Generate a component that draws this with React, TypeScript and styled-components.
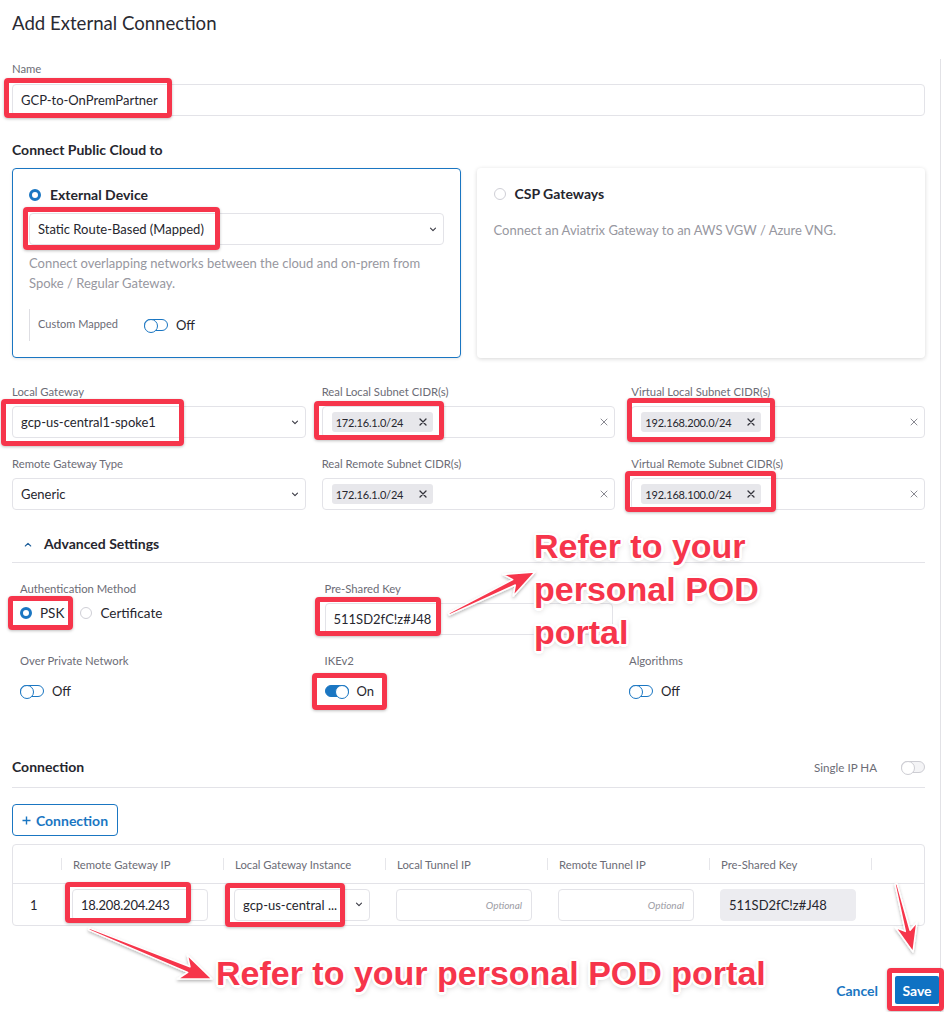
import React from "react";
import styled, { createGlobalStyle } from "styled-components";

const BLUE = "#1a76c2";
const RED = "#f6354b";

const GlobalStyle = createGlobalStyle`
  html, body { margin: 0; padding: 0; background: #fff; }
  body { font-family: Lato, "Noto Sans", sans-serif; color: #26262e; }
  * { box-sizing: border-box; }
`;

const Screen = styled.div`
  position: relative;
  width: 944px;
  height: 1012px;
  overflow: hidden;
  background: #fff;
`;

const Form = styled.div`
  width: 925px;
  padding: 11px 0 0 12px;
  display: flex;
  flex-direction: column;
`;

const Title = styled.h1`
  margin: 0;
  font-size: 18.6px;
  line-height: 24px;
  font-weight: 400;
  color: #2a2a32;
`;

const Label = styled.div<{ $mt?: number }>`
  margin-top: ${(p) => p.$mt ?? 0}px;
  font-size: 11.3px;
  line-height: 16px;
  color: #6c6c76;
  white-space: nowrap;
`;

const Field = styled.div`
  display: flex;
  flex-direction: column;
  gap: 6px;
  min-width: 0;
`;

const Box = styled.div<{ $muted?: boolean }>`
  height: 32px;
  width: 100%;
  border: 1px solid ${(p) => (p.$muted ? "#ececf0" : "#e3e3e8")};
  background: ${(p) => (p.$muted ? "#ececf0" : "#fff")};
  border-radius: 4px;
  display: flex;
  align-items: center;
  padding: 0 6px 0 8px;
  font-size: 13px;
  color: #26262e;
  gap: 6px;
  white-space: nowrap;
`;

const BoxText = styled.span<{ $digits?: boolean }>`
  flex: 1;
  overflow: hidden;
  text-overflow: ellipsis;
  letter-spacing: ${(p) => (p.$digits ? "-0.25px" : "0")};
`;

const Placeholder = styled.span`
  flex: 1;
  text-align: right;
  padding-right: 3px;
  font-size: 10px;
  font-style: italic;
  color: #9c9ca4;
`;

const SectionTitle = styled.div<{ $mt?: number }>`
  margin-top: ${(p) => p.$mt ?? 0}px;
  font-size: 14px;
  line-height: 18px;
  font-weight: 700;
  color: #26262e;
`;

const Cards = styled.div`
  margin-top: 9px;
  display: grid;
  grid-template-columns: 1fr 1fr;
  gap: 16px;
`;

const Card = styled.div<{ $active?: boolean }>`
  border: 1px solid ${(p) => (p.$active ? BLUE : "transparent")};
  border-radius: 4px;
  box-shadow: ${(p) => (p.$active ? "0 1px 3px rgba(0,0,0,0.10)" : "0 1px 4px rgba(0,0,0,0.16)")};
  padding: ${(p) => (p.$active ? "17px 16px 15px" : "16px 16px 15px")};
  display: flex;
  flex-direction: column;
  height: 190px;
`;

const RadioRow = styled.label<{ $gap?: number }>`
  display: flex;
  align-items: center;
  gap: ${(p) => p.$gap ?? 9}px;
  font-size: 13.5px;
  line-height: 18px;
`;

const CardHead = styled(RadioRow)`
  font-weight: 700;
  font-size: 14px;
`;

const Radio = styled.span<{ $checked?: boolean }>`
  flex: none;
  width: 12px;
  height: 12px;
  border-radius: 50%;
  background: #fff;
  border: ${(p) => (p.$checked ? `3.5px solid ${BLUE}` : "1px solid #cfcfd6")};
`;

const Desc = styled.p<{ $mt: number }>`
  margin: ${(p) => p.$mt}px 0 0;
  font-size: 13px;
  line-height: 20px;
  color: #9797a0;
`;

const SubOption = styled.div`
  margin-top: 16px;
  height: 32px;
  border-left: 1px solid #dedee3;
  padding-left: 8px;
  display: flex;
  align-items: center;
  font-size: 11px;
  color: #6c6c76;
`;

const SubLabel = styled.span`
  width: 106px;
  margin-top: -3px;
`;

const ToggleRow = styled.div`
  display: flex;
  align-items: center;
  gap: 8px;
  height: 32px;
  font-size: 13px;
  color: #26262e;
`;

const Toggle = styled.span<{ $on?: boolean; $disabled?: boolean }>`
  position: relative;
  flex: none;
  width: 24px;
  height: 12px;
  border-radius: 6px;
  border: 1.5px solid ${(p) => (p.$disabled ? "#cdcdd3" : BLUE)};
  background: ${(p) => (p.$on ? BLUE : p.$disabled ? "#f4f4f6" : "#fff")};
  &::after {
    content: "";
    position: absolute;
    top: -1.5px;
    ${(p) => (p.$on ? "right: -1.5px;" : "left: -1.5px;")}
    width: 12px;
    height: 12px;
    border-radius: 50%;
    border: 1.5px solid ${(p) => (p.$disabled ? "#cdcdd3" : BLUE)};
    background: #fff;
  }
`;

const Grid3 = styled.div<{ $mt: number; $pad?: number }>`
  margin-top: ${(p) => p.$mt}px;
  padding: 0 ${(p) => p.$pad ?? 0}px;
  display: grid;
  grid-template-columns: repeat(3, 1fr);
  column-gap: ${(p) => (p.$pad ? 16.5 : 16)}px;
  row-gap: 18px;
`;

const Tag = styled.span`
  display: inline-flex;
  align-items: center;
  gap: 16px;
  height: 20px;
  padding: 0 6px 0 4px;
  background: #e7e7eb;
  border-radius: 3px;
  font-size: 11px;
  letter-spacing: -0.2px;
  color: #26262e;
  margin-left: 1px;
`;

const Spacer = styled.span`
  flex: 1;
`;

const AdvHeader = styled.div`
  margin-top: 25px;
  padding: 0 0 9px 12px;
  border-bottom: 1px solid #e3e3e8;
  display: flex;
  align-items: center;
  gap: 12px;
  font-size: 14px;
  line-height: 18px;
  font-weight: 700;
`;

const RadioGroup = styled.div`
  height: 32px;
  padding-top: 1px;
  display: flex;
  align-items: flex-start;
  gap: 16px;
`;

const ConnHeader = styled.div`
  margin-top: 51px;
  padding-bottom: 11px;
  border-bottom: 1px solid #e3e3e8;
  display: flex;
  align-items: center;
  justify-content: space-between;
`;

const HaGroup = styled.div`
  display: flex;
  align-items: center;
  gap: 24px;
  font-size: 11.6px;
  color: #6c6c76;
`;

const AddButton = styled.button`
  margin-top: 16px;
  align-self: flex-start;
  height: 32px;
  width: 106px;
  border: 1px solid ${BLUE};
  border-radius: 4px;
  background: #fff;
  color: ${BLUE};
  font-family: inherit;
  font-size: 14px;
  font-weight: 700;
  display: flex;
  align-items: center;
  justify-content: center;
  gap: 5px;
  padding: 0;
`;

const Table = styled.div`
  margin-top: 8px;
  border: 1px solid #e3e3e8;
  border-radius: 4px;
`;

const TRow = styled.div<{ $head?: boolean }>`
  display: grid;
  grid-template-columns: 48px repeat(5, 162px) 1fr;
  height: ${(p) => (p.$head ? 39 : 41)}px;
  border-bottom: ${(p) => (p.$head ? "1px solid #e3e3e8" : "none")};
  align-items: center;
`;

const Th = styled.div<{ $sep?: boolean }>`
  position: relative;
  height: 100%;
  display: flex;
  align-items: center;
  padding-left: 12px;
  font-size: 11.3px;
  color: #6c6c76;
  white-space: nowrap;
  &::before {
    content: "";
    display: ${(p) => (p.$sep ? "block" : "none")};
    position: absolute;
    left: 0;
    top: 13px;
    height: 12px;
    border-left: 1px solid #e6e6ea;
  }
`;

const Td = styled.div<{ $index?: boolean }>`
  padding: 0 ${(p) => (p.$index ? "0 0 17px" : "15px 0 11px")};
  font-size: 13px;
  color: #26262e;
`;

const Footer = styled.div`
  margin-top: 50px;
  width: 944px;
  padding-right: 5px;
  display: flex;
  justify-content: flex-end;
  align-items: center;
  gap: 17px;
`;

const LinkButton = styled.button`
  border: none;
  background: none;
  padding: 0;
  color: ${BLUE};
  font-family: inherit;
  font-size: 14px;
  font-weight: 700;
`;

const PrimaryButton = styled.button`
  height: 28px;
  width: 44px;
  border: none;
  border-radius: 2px;
  background: #0f72c3;
  color: #fff;
  font-family: inherit;
  font-size: 14px;
  font-weight: 700;
  padding: 0;
`;

const ScrollEdge = styled.div`
  position: absolute;
  left: 940px;
  top: 59px;
  bottom: 0;
  border-left: 1px solid #e2e2e6;
`;

/* ---------- annotations ---------- */

const Mark = styled.div<{ $x: number; $y: number; $w: number; $h: number }>`
  position: absolute;
  left: ${(p) => p.$x}px;
  top: ${(p) => p.$y}px;
  width: ${(p) => p.$w}px;
  height: ${(p) => p.$h}px;
  border: 5px solid ${RED};
  border-radius: 4px;
  box-shadow: 0 1px 3px rgba(0, 0, 0, 0.25);
  pointer-events: none;
`;

const Callout = styled.div<{ $x: number; $y: number }>`
  position: absolute;
  left: ${(p) => p.$x}px;
  top: ${(p) => p.$y}px;
  font-family: "Liberation Sans", Arial, sans-serif;
  font-weight: 700;
  font-size: 34px;
  line-height: 43px;
  color: ${RED};
  white-space: nowrap;
  text-shadow: 2.5px 0 #fff, -2.5px 0 #fff, 0 2.5px #fff, 0 -2.5px #fff,
    1.8px 1.8px #fff, -1.8px -1.8px #fff, 1.8px -1.8px #fff, -1.8px 1.8px #fff,
    0 2px 6px rgba(0, 0, 0, 0.3);
`;

const ArrowLayer = styled.svg`
  position: absolute;
  left: 0;
  top: 0;
  width: 944px;
  height: 1012px;
  pointer-events: none;
`;

function arrowPoints(
  x1: number,
  y1: number,
  x2: number,
  y2: number,
  headLen = 28,
  headW = 24,
  shaftW = 6,
  tailW = 2
): string {
  const dx = x2 - x1;
  const dy = y2 - y1;
  const L = Math.hypot(dx, dy);
  const ux = dx / L;
  const uy = dy / L;
  const nx = -uy;
  const ny = ux;
  const bx = x2 - ux * headLen;
  const by = y2 - uy * headLen;
  const cx = x2 - ux * headLen * 0.78;
  const cy = y2 - uy * headLen * 0.78;
  const pts: [number, number][] = [
    [x1 + (nx * tailW) / 2, y1 + (ny * tailW) / 2],
    [cx + (nx * shaftW) / 2, cy + (ny * shaftW) / 2],
    [bx + (nx * headW) / 2, by + (ny * headW) / 2],
    [x2, y2],
    [bx - (nx * headW) / 2, by - (ny * headW) / 2],
    [cx - (nx * shaftW) / 2, cy - (ny * shaftW) / 2],
    [x1 - (nx * tailW) / 2, y1 - (ny * tailW) / 2],
  ];
  return pts.map((p) => `${p[0].toFixed(1)},${p[1].toFixed(1)}`).join(" ");
}

/* ---------- icons ---------- */

const Chevron = ({ up }: { up?: boolean }) => (
  <svg width="8" height="5" viewBox="0 0 8 5" style={{ flex: "none" }}>
    <path
      d={up ? "M1.3 4 L4 1.3 L6.7 4" : "M1.5 1.2 L4 3.7 L6.5 1.2"}
      fill="none"
      stroke={up ? "#1f5f9a" : "#3a3a44"}
      strokeWidth="1.1"
      strokeLinecap="round"
      strokeLinejoin="round"
    />
  </svg>
);

const Cross = ({ dark }: { dark?: boolean }) => (
  <svg width="8" height="8" viewBox="0 0 8 8" style={{ flex: "none" }}>
    <path
      d="M1 1 L7 7 M7 1 L1 7"
      stroke={dark ? "#33333b" : "#8a8a92"}
      strokeWidth={dark ? 1.3 : 1}
      strokeLinecap="round"
    />
  </svg>
);

const Plus = () => (
  <svg width="9" height="9" viewBox="0 0 9 9" style={{ flex: "none" }}>
    <path d="M4.5 0.5 V8.5 M0.5 4.5 H8.5" stroke={BLUE} strokeWidth="1.4" />
  </svg>
);

const TagBox = ({ value }: { value: string }) => (
  <Box>
    <Tag>
      {value}
      <Cross dark />
    </Tag>
    <Spacer />
    <Cross />
  </Box>
);

export default function App() {
  return (
    <Screen>
      <GlobalStyle />
      <Form>
        <Title>Add External Connection</Title>

        <Label $mt={26}>Name</Label>
        <Box style={{ marginTop: 7 }}>
          <BoxText>GCP-to-OnPremPartner</BoxText>
        </Box>

        <SectionTitle $mt={25}>Connect Public Cloud to</SectionTitle>
        <Cards>
          <Card $active>
            <CardHead>
              <Radio $checked />
              External Device
            </CardHead>
            <Box style={{ marginTop: 9 }}>
              <BoxText>Static Route-Based (Mapped)</BoxText>
              <Chevron />
            </Box>
            <Desc $mt={8}>
              Connect overlapping networks between the cloud and on-prem from
              Spoke / Regular Gateway.
            </Desc>
            <SubOption>
              <SubLabel>Custom Mapped</SubLabel>
              <ToggleRow>
                <Toggle />
                Off
              </ToggleRow>
            </SubOption>
          </Card>
          <Card>
            <CardHead>
              <Radio />
              CSP Gateways
            </CardHead>
            <Desc $mt={17}>Connect an Aviatrix Gateway to an AWS VGW / Azure VNG.</Desc>
          </Card>
        </Cards>

        <Grid3 $mt={26}>
          <Field>
            <Label>Local Gateway</Label>
            <Box>
              <BoxText>gcp-us-central1-spoke1</BoxText>
              <Chevron />
            </Box>
          </Field>
          <Field>
            <Label>Real Local Subnet CIDR(s)</Label>
            <TagBox value="172.16.1.0/24" />
          </Field>
          <Field>
            <Label>Virtual Local Subnet CIDR(s)</Label>
            <TagBox value="192.168.200.0/24" />
          </Field>
          <Field>
            <Label>Remote Gateway Type</Label>
            <Box>
              <BoxText>Generic</BoxText>
              <Chevron />
            </Box>
          </Field>
          <Field>
            <Label>Real Remote Subnet CIDR(s)</Label>
            <TagBox value="172.16.1.0/24" />
          </Field>
          <Field>
            <Label>Virtual Remote Subnet CIDR(s)</Label>
            <TagBox value="192.168.100.0/24" />
          </Field>
        </Grid3>

        <AdvHeader>
          <Chevron up />
          Advanced Settings
        </AdvHeader>

        <Grid3 $mt={18} $pad={8}>
          <Field>
            <Label>Authentication Method</Label>
            <RadioGroup>
              <RadioRow $gap={8}>
                <Radio $checked />
                PSK
              </RadioRow>
              <RadioRow $gap={8}>
                <Radio />
                Certificate
              </RadioRow>
            </RadioGroup>
          </Field>
          <Field>
            <Label>Pre-Shared Key</Label>
            <Box>
              <BoxText>511SD2fC!z#J48</BoxText>
            </Box>
          </Field>
          <div />
          <Field>
            <Label>Over Private Network</Label>
            <ToggleRow>
              <Toggle />
              Off
            </ToggleRow>
          </Field>
          <Field>
            <Label>IKEv2</Label>
            <ToggleRow>
              <Toggle $on />
              On
            </ToggleRow>
          </Field>
          <Field>
            <Label>Algorithms</Label>
            <ToggleRow>
              <Toggle />
              Off
            </ToggleRow>
          </Field>
        </Grid3>

        <ConnHeader>
          <SectionTitle>Connection</SectionTitle>
          <HaGroup>
            Single IP HA
            <Toggle $disabled />
          </HaGroup>
        </ConnHeader>

        <AddButton>
          <Plus />
          Connection
        </AddButton>

        <Table>
          <TRow $head>
            <Th />
            <Th $sep>Remote Gateway IP</Th>
            <Th $sep>Local Gateway Instance</Th>
            <Th $sep>Local Tunnel IP</Th>
            <Th $sep>Remote Tunnel IP</Th>
            <Th $sep>Pre-Shared Key</Th>
            <Th $sep />
          </TRow>
          <TRow>
            <Td $index>1</Td>
            <Td>
              <Box>
                <BoxText $digits>18.208.204.243</BoxText>
              </Box>
            </Td>
            <Td>
              <Box>
                <BoxText>gcp-us-central ...</BoxText>
                <Chevron />
              </Box>
            </Td>
            <Td>
              <Box>
                <Placeholder>Optional</Placeholder>
              </Box>
            </Td>
            <Td>
              <Box>
                <Placeholder>Optional</Placeholder>
              </Box>
            </Td>
            <Td>
              <Box $muted>
                <BoxText>511SD2fC!z#J48</BoxText>
              </Box>
            </Td>
            <Td />
          </TRow>
        </Table>
      </Form>

      <Footer>
        <LinkButton>Cancel</LinkButton>
        <PrimaryButton>Save</PrimaryButton>
      </Footer>

      <ScrollEdge />

      <Mark $x={4} $y={78} $w={168} $h={40} />
      <Mark $x={23} $y={207} $w={197} $h={43} />
      <Mark $x={1} $y={399} $w={183} $h={47} />
      <Mark $x={314} $y={401} $w={130} $h={39} />
      <Mark $x={627} $y={398} $w={148} $h={44} />
      <Mark $x={625} $y={471} $w={151} $h={41} />
      <Mark $x={8} $y={596} $w={65} $h={34} />
      <Mark $x={315} $y={597} $w={126} $h={39} />
      <Mark $x={312} $y={673} $w={75} $h={37} />
      <Mark $x={65} $y={882} $w={126} $h={41} />
      <Mark $x={225} $y={883} $w={120} $h={44} />
      <Mark $x={887} $y={968} $w={57} $h={43} />

      <ArrowLayer viewBox="0 0 944 1012">
        <defs>
          <filter id="ash" x="-20%" y="-20%" width="140%" height="140%">
            <feDropShadow dx="0" dy="1.5" stdDeviation="1.5" floodColor="#000" floodOpacity="0.3" />
          </filter>
        </defs>
        <g fill={RED} stroke="#fff" strokeWidth="1.5" strokeLinejoin="round" filter="url(#ash)">
          <polygon points={arrowPoints(449, 614, 535, 572, 30, 24, 6, 2)} />
          <polygon points={arrowPoints(89, 929, 212, 979, 32, 26, 6, 2)} />
          <polygon points={arrowPoints(896, 884, 913, 952, 28, 22, 5, 2)} />
        </g>
      </ArrowLayer>

      <Callout $x={534} $y={525}>
        Refer to your
        <br />
        personal POD
        <br />
        portal
      </Callout>
      <Callout $x={216} $y={952}>
        Refer to your personal POD portal
      </Callout>
    </Screen>
  );
}
